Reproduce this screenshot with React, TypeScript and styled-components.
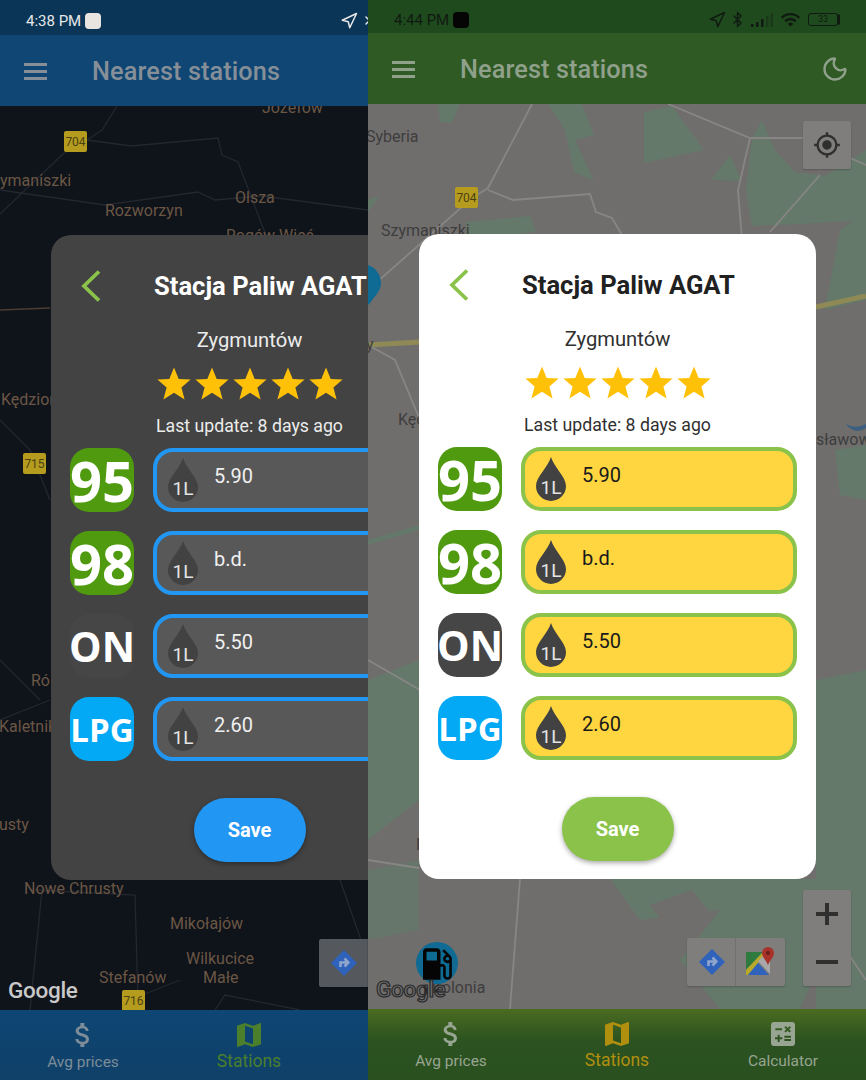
import { FC } from 'react';
import styled, { createGlobalStyle, ThemeProvider } from 'styled-components';
import { MdAttachMoney, MdMap, MdCalculate, MdGpsFixed, MdLocalGasStation, MdWifi } from 'react-icons/md';
import { Moon, Navigation, Bluetooth } from 'lucide-react';

const GlobalStyle = createGlobalStyle`
  html, body { margin: 0; padding: 0; background: #000; }
  body { font-family: Roboto, "Liberation Sans", sans-serif; }
`;

const darkTheme = {
  viewW: 368,
  statusH: 35,
  headerH: 71,
  tabsH: 70,
  modalTop: 235,
  statusBg: '#0b3557',
  statusText: '#e8e8e8',
  headerBg: '#0f4673',
  headerText: '#868f98',
  tabsBg: 'linear-gradient(#0e4674, #0f4068)',
  tabText: '#7d8c99',
  tabActive: '#4b7f2c',
  modalBg: '#434343',
  title: '#ffffff',
  body: '#ececec',
  fieldBg: '#585858',
  fieldBorder: '#2196f3',
  value: '#f0f0f0',
  drop: '#424242',
  save: '#2196f3',
  ctrl: '#55585c',
  ctrlIcon: '#2f2f2f',
};

const lightTheme = {
  viewW: 498,
  statusH: 33,
  headerH: 71,
  tabsH: 71,
  modalTop: 234,
  statusBg: '#1f4a1e',
  statusText: '#101a10',
  headerBg: '#2f5a24',
  headerText: '#8fa08b',
  tabsBg: 'linear-gradient(#4a6b20, #2b5220 45%, #2a5020)',
  tabText: '#97a592',
  tabActive: '#b08f0f',
  modalBg: '#ffffff',
  title: '#212121',
  body: '#303030',
  fieldBg: '#ffd640',
  fieldBorder: '#8bc34a',
  value: '#1a1a1a',
  drop: '#424242',
  save: '#8bc34a',
  ctrl: '#7f7e7d',
  ctrlIcon: '#2f2f2f',
};

const Screen = styled.div`
  display: flex;
  width: 866px;
  height: 1080px;
  overflow: hidden;
`;

const Viewport = styled.div`
  flex: none;
  width: ${(p) => p.theme.viewW}px;
  height: 1080px;
  overflow: hidden;
`;

const Phone = styled.div`
  position: relative;
  display: flex;
  flex-direction: column;
  width: 498px;
  height: 1080px;
`;

const StatusBar = styled.div`
  flex: none;
  display: flex;
  align-items: center;
  box-sizing: border-box;
  height: ${(p) => p.theme.statusH}px;
  padding: 6px 0 0 26px;
  background: ${(p) => p.theme.statusBg};
  color: ${(p) => p.theme.statusText};
  font-size: 15px;
`;

const NotifyDot = styled.span`
  width: 16px;
  height: 16px;
  margin-left: 4px;
  border-radius: 4px;
  background: ${(p) => (p.theme.viewW === 368 ? '#e8e4e0' : '#050505')};
`;

const StatusIcons = styled.div`
  display: flex;
  align-items: center;
  gap: 7px;
  margin-left: auto;
  padding-right: 28px;
  svg:nth-child(1) {
    margin-right: -4px;
  }
  svg:nth-child(2) {
    margin-right: -2px;
  }
`;

const BatteryBox = styled.div`
  width: 28px;
  height: 11px;
  border: 1px solid currentColor;
  border-radius: 3px;
  font-size: 9px;
  line-height: 11px;
  text-align: center;
  box-shadow: 3px 0 0 -1px currentColor;
`;

const Header = styled.header`
  flex: none;
  display: flex;
  align-items: center;
  height: ${(p) => p.theme.headerH}px;
  padding: 0 17px 0 24px;
  background: ${(p) => p.theme.headerBg};
  color: ${(p) => p.theme.headerText};
`;

const Burger = styled.div`
  display: flex;
  flex-direction: column;
  gap: 4px;
  width: 23px;
  margin-top: 1px;
  span {
    height: 3px;
    background: currentColor;
  }
`;

const HeaderTitle = styled.h1`
  margin: 2px 0 0 45px;
  font-size: 25.3px;
  font-weight: 500;
  letter-spacing: 0.1px;
`;

const HeaderAction = styled.div`
  display: flex;
  margin-left: auto;
`;

const MapArea = styled.div`
  position: relative;
  flex: 1;
  min-height: 0;
  overflow: hidden;
  svg.map {
    display: block;
    width: ${(p) => p.theme.viewW}px;
    height: 100%;
  }
`;

const Place = styled.text`
  font-family: Roboto, sans-serif;
  font-size: 16px;
  fill: ${(p) => (p.theme.viewW === 368 ? '#6b5745' : '#3e3d3d')};
`;

const ShieldText = styled.text`
  font-family: Roboto, sans-serif;
  font-size: 12px;
  fill: #4a4214;
  text-anchor: middle;
`;

const GoogleMark = styled.span`
  position: absolute;
  left: 8px;
  bottom: 7px;
  font-size: 22.5px;
  font-weight: 500;
  letter-spacing: -0.3px;
  line-height: 26px;
  color: ${(p) => (p.theme.viewW === 368 ? '#c9c9c9' : '#6e6e6e')};
  -webkit-text-stroke: ${(p) => (p.theme.viewW === 368 ? '0' : '1.2px #2a2a2a')};
`;

const PumpMark = styled.div`
  position: absolute;
  left: 48px;
  bottom: 24px;
  display: flex;
  color: #050505;
`;

const CtrlGroup = styled.div<{ $right: number; $bottom: number; $column?: boolean }>`
  position: absolute;
  right: ${(p) => p.$right}px;
  bottom: ${(p) => p.$bottom}px;
  display: flex;
  flex-direction: ${(p) => (p.$column ? 'column' : 'row')};
  border-radius: 2px;
  background: ${(p) => p.theme.ctrl};
  box-shadow: 0 1px 2px rgba(0, 0, 0, 0.2);
`;

const CtrlButton = styled.div`
  display: flex;
  align-items: center;
  justify-content: center;
  width: 48px;
  height: 48px;
  color: ${(p) => p.theme.ctrlIcon};
`;

const CtrlWide = styled(CtrlButton)`
  width: 49px;
  & + & {
    box-shadow: -1px 0 0 rgba(0, 0, 0, 0.1);
  }
`;

const Tabs = styled.nav`
  flex: none;
  display: grid;
  grid-template-columns: repeat(3, 166px);
  height: ${(p) => p.theme.tabsH}px;
  background: ${(p) => p.theme.tabsBg};
`;

const Tab = styled.div<{ $active?: boolean }>`
  display: flex;
  flex-direction: column;
  align-items: center;
  padding-top: 9px;
  color: ${(p) => (p.$active ? p.theme.tabActive : p.theme.tabText)};
  font-size: ${(p) => (p.$active ? 17.5 : 15.5)}px;
  line-height: 19px;
  svg {
    margin-bottom: ${(p) => (p.$active ? 1 : 2)}px;
  }
`;

const Modal = styled.section`
  position: absolute;
  top: ${(p) => p.theme.modalTop}px;
  left: 51px;
  width: 397px;
  height: 645px;
  display: flex;
  flex-direction: column;
  box-sizing: border-box;
  padding: 0 19px;
  border-radius: 20px;
  background: ${(p) => p.theme.modalBg};
`;

const TitleRow = styled.div`
  display: flex;
  align-items: center;
  height: 51px;
  margin-top: 25px;
  padding-left: 11px;
`;

const StationName = styled.h2`
  margin: 0 0 0 53px;
  color: ${(p) => p.theme.title};
  font-size: 25.6px;
  font-weight: 700;
  white-space: nowrap;
`;

const City = styled.div`
  margin-top: 17px;
  color: ${(p) => p.theme.body};
  font-size: 20.2px;
  line-height: 24px;
  text-align: center;
`;

const Stars = styled.div`
  display: flex;
  justify-content: center;
  gap: 4px;
  margin-top: 12px;
  height: 38px;
  align-items: center;
`;

const UpdatedAt = styled.div`
  margin-top: 12px;
  color: ${(p) => p.theme.body};
  font-size: 17.7px;
  line-height: 24px;
  text-align: center;
`;

const FuelList = styled.div`
  display: flex;
  flex-direction: column;
  gap: 19px;
  margin-top: 10px;
`;

const FuelRow = styled.div`
  display: flex;
  gap: 19px;
`;

const FuelBadge = styled.div<{ $bg: string; $size: number }>`
  flex: none;
  display: flex;
  align-items: center;
  justify-content: center;
  width: 64px;
  height: 64px;
  border-radius: 19px;
  background: ${(p) => p.$bg};
  color: #fff;
  font-family: "Open Sans", sans-serif;
  font-size: ${(p) => p.$size}px;
  font-weight: 700;
  overflow: hidden;
`;

const PriceField = styled.div`
  flex: none;
  display: flex;
  box-sizing: border-box;
  width: 276px;
  height: 64px;
  padding-left: 11px;
  align-items: center;
  gap: 16px;
  border: 4px solid ${(p) => p.theme.fieldBorder};
  border-radius: 20px;
  background: ${(p) => p.theme.fieldBg};
`;

const PriceValue = styled.span`
  margin-top: -9px;
  color: ${(p) => p.theme.value};
  font-size: 20px;
`;

const SaveButton = styled.button`
  align-self: center;
  width: 112px;
  height: 64px;
  margin-top: 37px;
  border: 0;
  border-radius: 32px;
  background: ${(p) => p.theme.save};
  color: #fff;
  font-family: Roboto, sans-serif;
  font-size: 20px;
  font-weight: 700;
  box-shadow: 0 2px 5px rgba(0, 0, 0, 0.35);
`;

const Chevron: FC = () => (
  <svg width="20" height="32" viewBox="0 0 20 32" fill="none" stroke="#8bc34a" strokeWidth="3.8">
    <path d="M18 1.5 3 16l15 14.5" />
  </svg>
);

const Star: FC = () => (
  <svg width="34" height="33" viewBox="0 0 34 33">
    <path fill="#ffc107" d="M17 0.5 21.7 12 33.6 12.6 24.4 20.6 27.6 32.5 17 25.8 6.4 32.5 9.6 20.6 0.4 12.6 12.3 12Z" />
  </svg>
);

const Drop: FC = () => (
  <svg width="30" height="44" viewBox="0 0 30 44">
    <path fill="#424242" d="M15 0C12 10 0 20 0 29a15 15 0 0 0 30 0C30 20 18 10 15 0Z" />
    <text x="15" y="37" textAnchor="middle" fontFamily="Roboto, sans-serif" fontSize="19" fill="#e4e4e4">1L</text>
  </svg>
);

const SignalBars: FC = () => (
  <svg width="22" height="14" viewBox="0 0 22 14" fill="currentColor">
    <rect x="0" y="11" width="2.5" height="3" />
    <rect x="5" y="9" width="2.5" height="5" />
    <rect x="10" y="6" width="2.5" height="8" />
    <rect x="15" y="3" width="2.5" height="11" opacity=".35" />
    <rect x="19.5" y="0" width="2.5" height="14" opacity=".35" />
  </svg>
);

const Shield: FC<{ x: number; y: number; label: string }> = ({ x, y, label }) => (
  <g>
    <rect x={x} y={y} width="23" height="21" rx="2" fill="#b59c1e" />
    <ShieldText x={x + 11.5} y={y + 15}>{label}</ShieldText>
  </g>
);

const DirectionsGlyph: FC = () => (
  <svg width="26" height="26" viewBox="0 0 26 26">
    <path fill="#2f62bb" d="M13 0 26 13 13 26 0 13Z" />
    <path fill="none" stroke="#8fa5cc" strokeWidth="2.6" d="M9.5 17v-4.5h7M13.5 8.5l3.8 4-3.8 4" />
  </svg>
);

const GmapsGlyph: FC = () => (
  <svg width="30" height="30" viewBox="0 0 30 30">
    <path fill="#2f7a3e" d="M0 5h17L0 23Z" />
    <path fill="#b9a92a" d="M0 23 17 5h4L2 28H0Z" />
    <path fill="#a8a8a8" d="M21 5h3v22L12 14Z" />
    <path fill="#2f62bb" d="M2 28 12 16l11 12Z" />
    <path fill="#a8322a" d="M22 0a6 6 0 0 1 6 6c0 4-4 7-6 12-2-5-6-8-6-12a6 6 0 0 1 6-6Z" />
    <circle cx="22" cy="6" r="2" fill="#6a1f1a" />
  </svg>
);

const DarkMap: FC = () => (
  <svg className="map" viewBox="0 106 368 904" preserveAspectRatio="none">
    <rect x="0" y="106" width="368" height="904" fill="#0f131a" />
    <g fill="none" stroke="#23272e" strokeWidth="1.3">
      <path d="M0 214 64 153 87 140 102 130 117 106M87 140 131 146 218 138 222 155 238 162 262 225 268 240" />
      <path d="M0 190 105 205 198 192 215 200 262 196 368 210" />
      <path d="M0 310 50 308" stroke="#4d3c33" />
      <path d="M0 420 30 450 50 500M0 660 40 700M0 720 50 700M35 890 135 895 138 1000M42 890 30 1010" />
      <path d="M130 1000 180 980M215 1010 225 995 300 1010M340 880 368 960" />
    </g>
    <Place x="262" y="113">Józefów</Place>
    <Place x="0" y="186">ymaniszki</Place>
    <Place x="105" y="216">Rozworzyn</Place>
    <Place x="235" y="203">Olsza</Place>
    <Place x="226" y="241">Rogów Wieś</Place>
    <Place x="1" y="405">Kędzior</Place>
    <Place x="31" y="686">Ró</Place>
    <Place x="-1" y="732">Kaletnik</Place>
    <Place x="-1" y="830">usty</Place>
    <Place x="24" y="894">Nowe Chrusty</Place>
    <Place x="170" y="929">Mikołajów</Place>
    <Place x="186" y="964">Wilkucice</Place>
    <Place x="203" y="983">Małe</Place>
    <Place x="99" y="983">Stefanów</Place>
    <Shield x={64} y={131} label="704" />
    <Shield x={23} y={453} label="715" />
    <Shield x={122} y={990} label="716" />
  </svg>
);

const LightMap: FC = () => (
  <svg className="map" viewBox="368 104 498 905" preserveAspectRatio="none">
    <rect x="368" y="104" width="498" height="905" fill="#706e6d" />
    <g fill="#64796a">
      <path d="M438 104 460 104 452 123 440 122Z" />
      <path d="M548 104 582 104 594 135 575 140 594 181 574 172 565 130Z" />
      <path d="M644 112 672 106 704 150 644 163Z" />
      <path d="M711 180 730 155 742 181Z" />
      <path d="M752 138 762 120 775 150 795 172 825 176 866 150 866 220 800 224 752 226 746 190Z" />
      <path d="M466 222 530 216 536 232 466 240Z" />
      <path d="M368 200 380 195 368 212Z" />
      <path d="M368 540 419 525 419 530 368 545Z" />
      <path d="M368 680 419 660 419 800 368 840Z" />
      <path d="M368 870 419 860 419 930 368 940Z" opacity=".7" />
      <path d="M840 230 866 210 866 300 825 310Z" />
      <path d="M835 450 866 445 866 500 840 495Z" />
      <path d="M816 680 866 670 866 1009 816 1009Z" />
      <path d="M610 879 816 879 830 940 800 1009 720 1009 680 960 720 910 640 920Z" />
    </g>
    <path fill="#706e6d" d="M650 905 692 890 712 915 672 935Z" />
    <g fill="none" stroke="#878685" strokeWidth="1.8">
      <path d="M532 104 488 188 472 198 368 290M488 190 513 200 590 194 596 212 612 218 625 240" />
      <path d="M668 104 750 138H803L866 165M750 138 738 190 742 240M820 175 770 232" />
      <path d="M368 345 395 360 420 420M368 660 420 690M520 879 510 1009M805 890 866 980" />
      <path d="M368 860 419 868" />
    </g>
    <path d="M368 345 420 342M816 307 866 296" stroke="#8f8a55" strokeWidth="5" fill="none" />
    <path d="M845 423Q855 430 866 424L866 428Q855 436 845 423Z" fill="#3d5f80" />
    <path d="M362 264a19 19 0 0 1 19 19c0 9-7 13-12 22-5-9-26-13-26-22a19 19 0 0 1 19-19Z" fill="#0f6a94" />
    <Place x="366" y="142">Syberia</Place>
    <Place x="381" y="236">Szymaniszki</Place>
    <Place x="366" y="350">y</Place>
    <Place x="398" y="425">Kęd</Place>
    <Place x="816" y="445">sławow</Place>
    <Place x="416" y="850">N</Place>
    <Place x="432" y="993">Kolonia</Place>
    <Shield x={455} y={187} label="704" />
    <circle cx="437" cy="963" r="21" fill="#0f6a94" />
  </svg>
);

const StationModal: FC = () => {
  const fuels = [
    { name: '95', bg: '#4f9a0e', size: 56, value: '5.90' },
    { name: '98', bg: '#4f9a0e', size: 56, value: 'b.d.' },
    { name: 'ON', bg: '#464646', size: 41, value: '5.50' },
    { name: 'LPG', bg: '#03a9f4', size: 33, value: '2.60' },
  ];
  return (
    <Modal>
      <TitleRow>
        <Chevron />
        <StationName>Stacja Paliw AGAT</StationName>
      </TitleRow>
      <City>Zygmuntów</City>
      <Stars>
        {[0, 1, 2, 3, 4].map((i) => <Star key={i} />)}
      </Stars>
      <UpdatedAt>Last update: 8 days ago</UpdatedAt>
      <FuelList>
        {fuels.map((f) => (
          <FuelRow key={f.name}>
            <FuelBadge $bg={f.bg} $size={f.size}>{f.name}</FuelBadge>
            <PriceField>
              <Drop />
              <PriceValue>{f.value}</PriceValue>
            </PriceField>
          </FuelRow>
        ))}
      </FuelList>
      <SaveButton>Save</SaveButton>
    </Modal>
  );
};

const PhoneView: FC<{ theme: typeof darkTheme; time: string; isDark: boolean }> = ({ theme, time, isDark }) => (
  <ThemeProvider theme={theme}>
    <Viewport>
      <Phone>
        <StatusBar>
          {time}
          <NotifyDot />
          <StatusIcons>
            <Navigation size={18} />
            <Bluetooth size={17} />
            <SignalBars />
            <MdWifi size={21} />
            <BatteryBox>33</BatteryBox>
          </StatusIcons>
        </StatusBar>
        <Header>
          <Burger><span /><span /><span /></Burger>
          <HeaderTitle>Nearest stations</HeaderTitle>
          <HeaderAction><Moon size={28} /></HeaderAction>
        </Header>
        <MapArea>
          {isDark ? <DarkMap /> : <LightMap />}
          {!isDark && (
            <>
              <PumpMark><MdLocalGasStation size={42} /></PumpMark>
              <CtrlGroup $right={15} $bottom={840}>
                <CtrlButton><MdGpsFixed size={28} /></CtrlButton>
              </CtrlGroup>
              <CtrlGroup $right={15} $bottom={23} $column>
                <CtrlButton><svg width="22" height="22" viewBox="0 0 22 22"><path fill="currentColor" d="M9 0h4v9h9v4h-9v9H9v-9H0V9h9Z" /></svg></CtrlButton>
                <CtrlButton><svg width="22" height="4" viewBox="0 0 22 4"><rect width="22" height="4" fill="currentColor" /></svg></CtrlButton>
              </CtrlGroup>
            </>
          )}
          <CtrlGroup $right={81} $bottom={23}>
            <CtrlWide><DirectionsGlyph /></CtrlWide>
            <CtrlWide><GmapsGlyph /></CtrlWide>
          </CtrlGroup>
          <GoogleMark>Google</GoogleMark>
        </MapArea>
        <Tabs>
          <Tab><MdAttachMoney size={32} />Avg prices</Tab>
          <Tab $active><MdMap size={32} />Stations</Tab>
          <Tab><MdCalculate size={32} />Calculator</Tab>
        </Tabs>
        <StationModal />
      </Phone>
    </Viewport>
  </ThemeProvider>
);

export default function App() {
  return (
    <>
      <GlobalStyle />
      <Screen>
        <PhoneView theme={darkTheme} time="4:38 PM" isDark />
        <PhoneView theme={lightTheme} time="4:44 PM" isDark={false} />
      </Screen>
    </>
  );
}
